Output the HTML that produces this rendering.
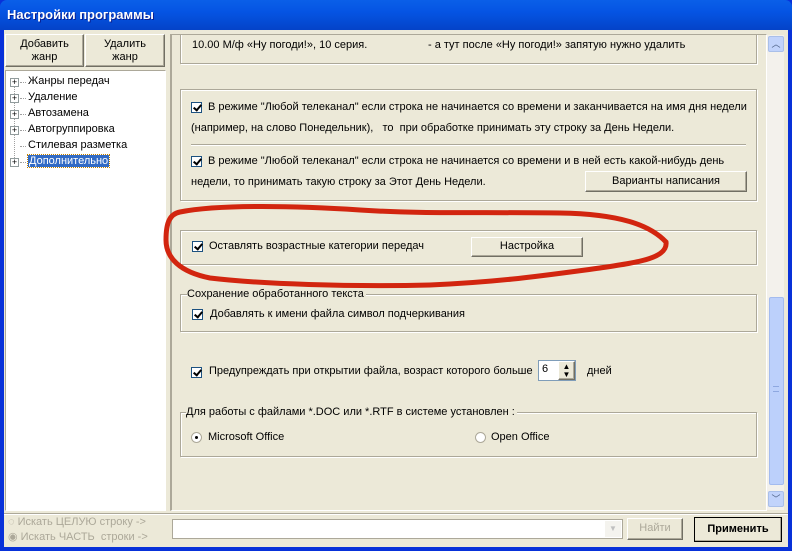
<!DOCTYPE html><html><head><meta charset="utf-8"><style>
*{box-sizing:border-box}
body{margin:0;width:792px;height:551px;overflow:hidden;background:#0831d9;font:11px "Liberation Sans","DejaVu Sans",sans-serif;color:#000;position:relative}
.a{position:absolute}
.btn{position:absolute;background:#ece9d8;border:1px solid;border-color:#fff #716f64 #716f64 #fff;box-shadow:inset -1px -1px 0 #aca899;text-align:center}
.grp{position:absolute;border:1px solid #aca899;box-shadow:inset 1px 1px 0 #fff, 1px 1px 0 #fff;}
.cb{position:absolute;width:11px;height:11px;border:1px solid #1c5180;background:#fff}
.cb:after{content:"";position:absolute;left:3px;top:0px;width:3px;height:6px;border:solid #000;border-width:0 2px 2px 0;transform:rotate(40deg)}
.t{position:absolute;white-space:nowrap}
.rad{position:absolute;width:11px;height:11px;border-radius:50%;border:1px solid #aca899;background:#fff}
</style></head><body>
<div class="a" style="left:0;top:0;width:792px;height:30px;background:linear-gradient(#0a5fe8,#0554e3 40%,#0443c8);border-radius:7px 7px 0 0"></div>
<div class="t" style="left:7px;top:7px;color:#fff;font-size:13px;font-weight:bold;text-shadow:1px 1px #0a1e8f">Настройки программы</div>
<div class="a" style="left:4px;top:30px;width:784px;height:517px;background:#ece9d8"></div>
<div class="btn" style="left:5px;top:34px;width:79px;height:33px;line-height:13px;padding-top:3px">Добавить<br>жанр</div>
<div class="btn" style="left:85px;top:34px;width:80px;height:33px;line-height:13px;padding-top:3px">Удалить<br>жанр</div>
<div class="a" style="left:5px;top:70px;width:161px;height:441px;background:#fff;border:1px solid;border-color:#aca899 #fff #fff #aca899"></div>
<div class="a" style="left:14px;top:80px;height:82px;border-left:1px dotted #a0a0a0"></div>
<div id="tree"></div>
<div class="a" style="left:170px;top:34px;width:597px;height:477px;border:1px solid;border-color:#aca899 #fff #fff #aca899;border-left:2px solid #aca899"></div>
<div class="a" style="left:172px;top:35px;width:595px;height:475px;overflow:hidden">
<div style="position:absolute;left:-172px;top:-35px;width:792px;height:551px">
<div class="grp" style="left:180px;top:25px;width:577px;height:39px"></div>
<div class="t" style="left:192px;top:39px">10.00 М/ф «Ну погоди!», 10 серия.</div>
<div class="t" style="left:428px;top:39px">- а тут после «Ну погоди!» запятую нужно удалить</div>
<div class="grp" style="left:180px;top:89px;width:577px;height:112px"></div>
<div class="cb" style="left:191px;top:102px"></div>
<div class="t" style="left:208px;top:101px">В режиме "Любой телеканал" если строка не начинается со времени и заканчивается на имя дня недели</div>
<div class="t" style="left:191px;top:122px">(например, на слово Понедельник),&nbsp;&nbsp; то&nbsp; при обработке принимать эту строку за День Недели.</div>
<div class="a" style="left:191px;top:144px;width:555px;height:1px;background:#aca899;box-shadow:0 1px 0 #fff"></div>
<div class="cb" style="left:191px;top:156px"></div>
<div class="t" style="left:208px;top:155px">В режиме "Любой телеканал" если строка не начинается со времени и в ней есть какой-нибудь день</div>
<div class="t" style="left:191px;top:176px">недели, то принимать такую строку за Этот День Недели.</div>
<div class="btn" style="left:585px;top:171px;width:162px;height:21px;line-height:18px">Варианты написания</div>
<div class="grp" style="left:180px;top:230px;width:577px;height:35px"></div>
<div class="cb" style="left:192px;top:241px"></div>
<div class="t" style="left:209px;top:240px">Оставлять возрастные категории передач</div>
<div class="btn" style="left:471px;top:237px;width:112px;height:20px;line-height:17px">Настройка</div>
<div class="grp" style="left:180px;top:294px;width:577px;height:38px"></div>
<div class="t" style="left:187px;top:288px;background:#ece9d8;padding-right:2px">Сохранение обработанного текста</div>
<div class="cb" style="left:192px;top:309px"></div>
<div class="t" style="left:210px;top:308px">Добавлять к имени файла символ подчеркивания</div>
<div class="cb" style="left:191px;top:367px"></div>
<div class="t" style="left:209px;top:365px">Предупреждать при открытии файла, возраст которого больше</div>
<div class="a" style="left:538px;top:360px;width:38px;height:21px;background:#fff;border:1px solid #7f9db9"></div>
<div class="t" style="left:542px;top:363px">6</div>
<div class="btn" style="left:558px;top:361px;width:17px;height:19px;font-size:8px;line-height:8px;padding-top:1px">▲<br>▼</div>
<div class="t" style="left:587px;top:365px">дней</div>
<div class="grp" style="left:180px;top:412px;width:577px;height:45px"></div>
<div class="t" style="left:186px;top:406px;background:#ece9d8;padding-right:2px">Для работы с файлами *.DOC или *.RTF в системе установлен :</div>
<div class="rad" style="left:191px;top:432px"><div class="a" style="left:3px;top:3px;width:3px;height:3px;border-radius:50%;background:#000"></div></div>
<div class="t" style="left:208px;top:431px">Microsoft Office</div>
<div class="rad" style="left:475px;top:432px"></div>
<div class="t" style="left:491px;top:431px">Open Office</div>
</div></div>
<div class="a" style="left:767px;top:35px;width:17px;height:475px;background:#f3f1ec"></div>
<div class="a" style="left:768px;top:36px;width:16px;height:16px;border-radius:2px;background:#c1d3fb;border:1px solid #a9bfe9;color:#4d6185;font-size:9px;text-align:center;line-height:14px">︿</div>
<div class="a" style="left:769px;top:297px;width:15px;height:188px;border-radius:2px;background:#bcd0fb;border:1px solid #a3bbef"></div>
<div class="a" style="left:773px;top:386px;width:6px;height:6px;border-top:1px solid #8ea8e0;border-bottom:1px solid #8ea8e0"></div>
<div class="a" style="left:768px;top:491px;width:16px;height:16px;border-radius:2px;background:#c1d3fb;border:1px solid #a9bfe9;color:#4d6185;font-size:9px;text-align:center;line-height:14px">﹀</div>
<div class="a" style="left:4px;top:513px;width:784px;height:1px;background:#aca899;box-shadow:0 1px 0 #fff"></div>
<div class="t" style="left:8px;top:516px;color:#aca899">◌ Искать ЦЕЛУЮ строку -&gt;</div>
<div class="t" style="left:8px;top:530px;color:#aca899">◉ Искать ЧАСТЬ&nbsp; строки -&gt;</div>
<div class="a" style="left:172px;top:519px;width:451px;height:20px;background:#fff;border:1px solid #aca899"></div>
<div class="a" style="left:605px;top:521px;width:16px;height:16px;background:#f4f3ee;color:#c0c0c0;font-size:8px;text-align:center;line-height:16px">▼</div>
<div class="btn" style="left:627px;top:518px;width:56px;height:22px;line-height:19px;color:#aca899">Найти</div>
<div class="btn" style="left:694px;top:517px;width:88px;height:25px;line-height:22px;border:1px solid #000;font-weight:bold">Применить</div>
<svg class="a" style="left:0;top:0" width="792" height="551"><path d="M180 212 C220 204 300 206 360 210 C420 214 480 212 560 213 C620 214 650 225 666 242 C668 258 640 262 600 268 C540 276 500 282 430 285 C350 287 260 284 210 278 C180 272 166 258 166 240 C166 222 170 214 180 212 Z" fill="none" stroke="#d2250f" stroke-width="5"/></svg>
<script>
var items=["Жанры передач","Удаление","Автозамена","Автогруппировка","Стилевая разметка","Дополнительно"],h="";
items.forEach(function(s,i){var y=74+i*16;
if(i!=4)h+='<div class="a" style="left:10px;top:'+(y+4)+'px;width:9px;height:9px;border:1px solid #919b9c;background:#fff;font-size:9px;line-height:6px;text-align:center;color:#000">+</div>';
h+='<div class="a" style="left:20px;top:'+(y+8)+'px;width:6px;border-top:1px dotted #a0a0a0"></div>';
h+='<div class="t" style="left:28px;top:'+(y+1)+'px;'+(i==5?'background:#316ac5;color:#fff;padding:0 1px;outline:1px dotted #c08000':'')+'">'+s+'</div>';});
document.getElementById("tree").innerHTML=h;
</script>
</body></html>
